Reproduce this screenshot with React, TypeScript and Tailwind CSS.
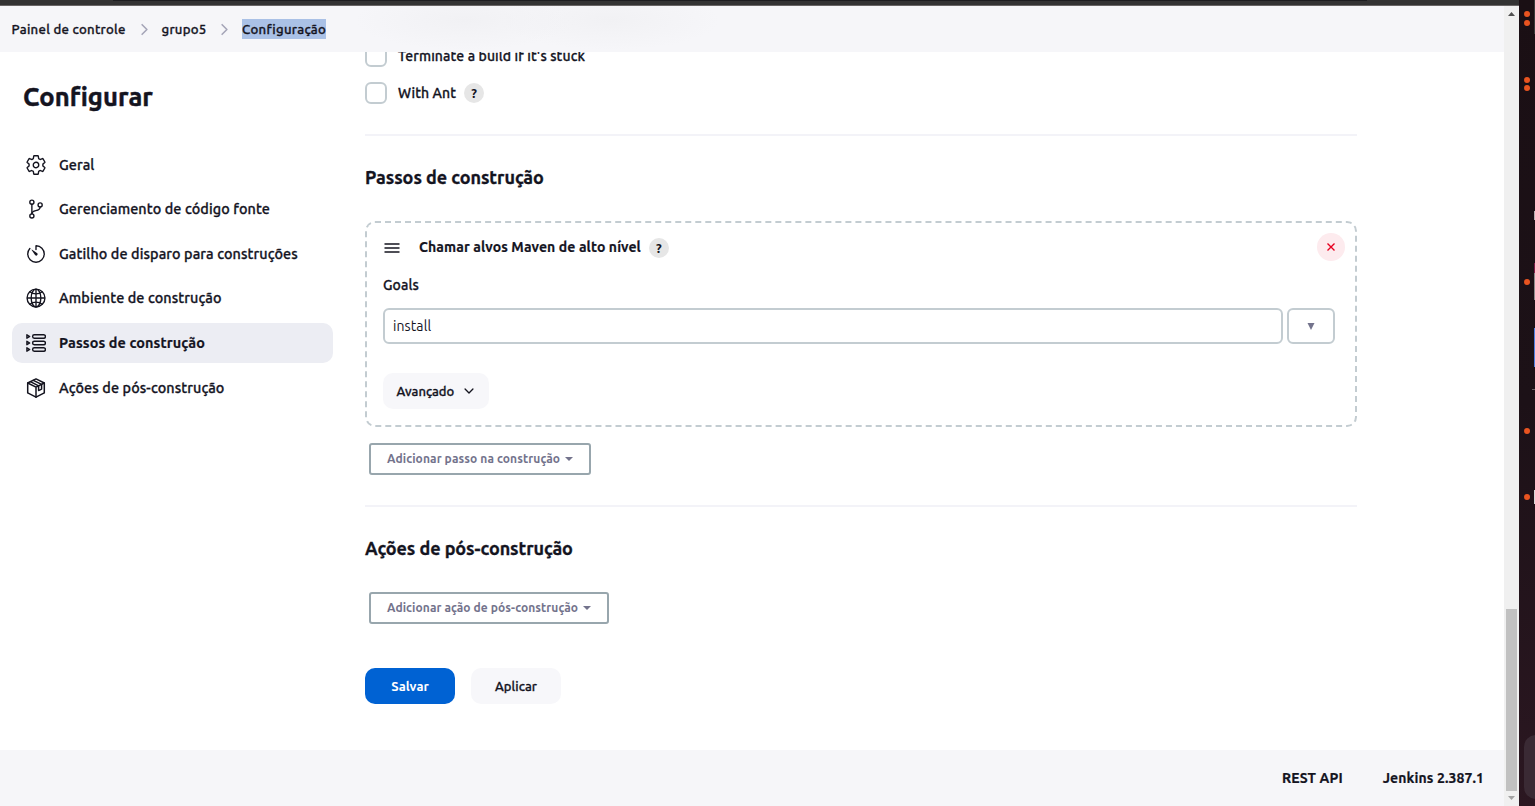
import type { ReactNode } from "react";
import {
  IoChevronDown,
  IoChevronForward,
  IoGitBranchOutline,
  IoGlobeOutline,
  IoSettingsOutline,
  IoTimerOutline,
} from "react-icons/io5";

function StepsIcon() {
  return (
    <svg viewBox="0 0 20 20" className="size-5" fill="none" stroke="currentColor" strokeWidth="1.4" strokeLinejoin="round">
      {[3.5, 10, 16.5].map((y) => (
        <g key={y}>
          <path d={`M0.9 ${y - 1.7}L3.7 ${y}L0.9 ${y + 1.7}Z`} />
          <rect x="6.6" y={y - 1.7} width="12.8" height="3.4" rx="1.7" />
        </g>
      ))}
    </svg>
  );
}

function PackageIcon() {
  return (
    <svg viewBox="0 0 20 20" className="size-5" fill="none" stroke="currentColor" strokeWidth="1.5" strokeLinejoin="round" strokeLinecap="round">
      <path d="M10 0.9L18.3 5V14.9L10 19.2L1.7 14.9V5Z" />
      <path d="M1.7 5L10 9.2L18.3 5M10 9.2V19.2" />
      <path d="M4.4 3.7L12.6 7.9V12.6L15.6 11.1V6.4L7.3 2.3" />
    </svg>
  );
}

function HelpBadge() {
  return (
    <span className="flex size-5 items-center justify-center rounded-full bg-[#e6e6e6] text-[13px] leading-none font-bold">?</span>
  );
}

function Checkbox({ children }: { children: ReactNode }) {
  return (
    <div className="flex h-[22px] items-center">
      <span className="size-[22px] rounded-md border-2 border-[#c3ccd1] bg-white" />
      <span className="ml-[11px] flex items-center gap-2 font-medium">{children}</span>
    </div>
  );
}

function Caret() {
  return (
    <svg viewBox="0 0 8 4" className="ml-[5px] h-1 w-2" fill="currentColor">
      <path d="M0 0H8L4 4Z" />
    </svg>
  );
}

const navItems = [
  { label: "Geral", icon: <IoSettingsOutline className="-m-px size-[22px]" />, row: "" },
  { label: "Gerenciamento de código fonte", icon: <IoGitBranchOutline className="-m-px size-[22px]" />, row: "mt-1" },
  { label: "Gatilho de disparo para construções", icon: <IoTimerOutline className="-m-px size-[22px]" />, row: "mt-[5px]" },
  { label: "Ambiente de construção", icon: <IoGlobeOutline className="-m-px size-[22px]" />, row: "mt-1" },
  { label: "Passos de construção", icon: <StepsIcon />, row: "mt-[5px]", active: true },
  { label: "Ações de pós-construção", icon: <PackageIcon />, row: "mt-[5px]" },
];

function Sidebar() {
  return (
    <aside className="w-[333px] shrink-0 pl-3">
      <h1 className="mt-[26px] pl-[11px] text-[25.6px] leading-[38px] font-bold tracking-[0.05px] [-webkit-text-stroke:0.5px]">Configurar</h1>
      <nav className="mt-[29px] flex flex-col">
        {navItems.map((item) => (
          <a key={item.label} className={`flex h-10 items-center gap-[13px] rounded-[10px] pl-[14px] text-[14.4px] ${item.row} ${item.active ? "bg-[#ecedf3]" : ""}`}>
            {item.icon}
            <span className={item.active ? "pt-[2px] font-bold tracking-[0.1px] [-webkit-text-stroke:0.2px]" : "pt-[2px] font-medium tracking-[0.09px] [-webkit-text-stroke:0.3px]"}>
              {item.label}
            </span>
          </a>
        ))}
      </nav>
    </aside>
  );
}

function BuildStep() {
  return (
    <div className="mt-[31px] h-[206px] rounded-[10px] border-2 border-dashed border-[#c3ccd1] pr-[20px] pl-4">
      <div className="mt-[10px] flex h-7 items-center">
        <svg viewBox="0 0 16 10" className="mt-[2px] ml-px h-[10px] w-4" fill="none" stroke="currentColor" strokeWidth="1.5">
          <path d="M0.5 1H15.5M0.5 5H15.5M0.5 9H15.5" />
        </svg>
        <span className="ml-[19px] font-bold tracking-[0.11px] [-webkit-text-stroke:0.2px]">Chamar alvos Maven de alto nível</span>
        <span className="mt-[2px] ml-2">
          <HelpBadge />
        </span>
        <button className="-mr-[10px] ml-auto flex size-7 items-center justify-center rounded-full bg-[#fdebee] text-[#e6001f]">
          <svg viewBox="0 0 8 8" className="size-2" stroke="currentColor" strokeWidth="1.4">
            <path d="M0.5 0.5L7.5 7.5M7.5 0.5L0.5 7.5" />
          </svg>
        </button>
      </div>
      <div className="mt-[14px] leading-5 font-medium tracking-[0.1px] [-webkit-text-stroke:0.3px]">Goals</div>
      <div className="mt-[13px] flex gap-1">
        <div className="flex h-9 flex-1 items-center rounded-md border-2 border-[#c3ccd1] px-2 tracking-[0.1px]">install</div>
        <button className="flex h-9 w-12 items-center justify-center rounded-md border-2 border-[#c3ccd1] text-[#73738c]">
          <svg viewBox="0 0 8 7" className="h-[7px] w-2" fill="currentColor">
            <path d="M0.5 0H7.5L4 7Z" />
          </svg>
        </button>
      </div>
      <button className="mt-[29px] flex h-9 w-[106px] items-center rounded-[10px] bg-[#f7f7fa] pt-px pl-[13.5px] text-[13px] font-medium [-webkit-text-stroke:0.3px]">
        Avançado
        <IoChevronDown className="mb-[2px] ml-[8px] size-[14px]" />
      </button>
    </div>
  );
}

function Dots({ className, count }: { className: string; count: number }) {
  return (
    <div className={`flex flex-col gap-[2.5px] pl-[5px] ${className}`}>
      {Array.from({ length: count }, (_, i) => (
        <span key={i} className="size-[6px] rounded-full bg-[#e95420]" />
      ))}
    </div>
  );
}

function Dock() {
  return (
    <div className="relative w-4 shrink-0 overflow-hidden bg-linear-to-b from-[#1a0f14] via-[#1c1117] to-[#2b1721]">
      <Dots count={2} className="pt-[11px]" />
      <Dots count={2} className="pt-[51px]" />
      <Dots count={1} className="pt-[188px]" />
      <Dots count={1} className="pt-[143px]" />
      <Dots count={1} className="pt-[60px]" />
      <span className="absolute top-0 left-[15px] h-[34px] w-px bg-[#3a3a3a]" />
      <span className="absolute top-[211px] left-[15px] h-[9px] w-px bg-[#b5aeb0]" />
      <span className="absolute top-[263px] left-[15px] h-[10px] w-px bg-[#7b1b46]" />
      <span className="absolute top-[273px] left-[15px] h-[27px] w-px bg-[#8a8a8a]" />
      <span className="absolute top-[328px] left-[15px] h-[39px] w-px bg-[#4d7fe0]" />
      <span className="absolute top-[389px] left-[13px] h-px w-[3px] bg-[#6a6266]" />
      <span className="absolute top-[490px] left-[15px] h-[14px] w-px bg-[#d5d5d5]" />
      <span className="absolute top-[735px] left-[5px] h-16 w-16 rounded-xl bg-[#3a2a34]" />
    </div>
  );
}

export default function App() {
  return (
    <div className="flex h-[806px] w-[1535px] overflow-hidden bg-white font-['Ubuntu','Noto_Sans',sans-serif] text-[14px] text-[#14141f]">
      <div className="flex w-[1519px] flex-col">
        <div className="flex h-[6px] shrink-0 flex-col border-b border-[#686565] bg-[#333333] pl-[113px]">
          <div className="h-px w-[1254px] bg-[#1d1d20]" />
        </div>
        <div className="flex min-h-0 flex-1">
          <div className="flex w-[1504px] flex-col">
            <header className="flex h-[46px] shrink-0 items-center bg-[#f6f6f9] bg-[radial-gradient(ellipse_110px_30px_at_465px_14px,#f1f1f4,transparent),radial-gradient(ellipse_110px_30px_at_610px_14px,#f1f1f4,transparent)] pl-[11.5px] text-[13.2px] font-medium">
              <span className="h-5 w-[115px] leading-5 tracking-[0.27px] whitespace-nowrap [-webkit-text-stroke:0.3px]">Painel de controle</span>
              <IoChevronForward className="mx-[9px] size-[17px] text-[#a5a5b8]" />
              <span className="h-5 w-[45.5px] leading-5 tracking-[0.25px] [-webkit-text-stroke:0.3px]">grupo5</span>
              <IoChevronForward className="mx-[9px] size-[17px] text-[#a5a5b8]" />
              <span className="h-5 bg-[#aac1e6] leading-5 tracking-[0.28px] [-webkit-text-stroke:0.3px]">Configuração</span>
            </header>
            <div className="flex min-h-0 flex-1 overflow-hidden">
              <Sidebar />
              <main className="ml-8 w-[992px] shrink-0">
                <div className="-mt-[7px] flex flex-col gap-[15px]">
                  <Checkbox>
                    <span className="tracking-[0.11px] [-webkit-text-stroke:0.3px]">Terminate a build if it's stuck</span>
                  </Checkbox>
                  <Checkbox>
                    <span className="tracking-[0.08px] [-webkit-text-stroke:0.3px]">With Ant</span>
                    <HelpBadge />
                  </Checkbox>
                </div>
                <hr className="mt-[30px] border-t-2 border-[#f3f3f8]" />
                <h2 className="mt-[28px] text-[18px] leading-[26px] font-bold tracking-[-0.06px] [-webkit-text-stroke:0.3px]">Passos de construção</h2>
                <BuildStep />
                <button className="mt-4 ml-1 flex h-8 w-[222px] items-center rounded-[3px] border-2 border-[#98a6ad] pl-4 text-[12px] font-bold tracking-[0.1px] whitespace-nowrap text-[#73738c]">
                  Adicionar passo na construção
                  <Caret />
                </button>
                <hr className="mt-[30px] border-t-2 border-[#f3f3f8]" />
                <h2 className="mt-[28px] text-[18px] leading-[26px] font-bold tracking-[-0.08px] [-webkit-text-stroke:0.3px]">Ações de pós-construção</h2>
                <button className="mt-[31px] ml-1 flex h-8 w-[240px] items-center rounded-[3px] border-2 border-[#98a6ad] pl-4 text-[12px] font-bold tracking-[0.08px] whitespace-nowrap text-[#73738c]">
                  Adicionar ação de pós-construção
                  <Caret />
                </button>
                <div className="mt-11 flex gap-4">
                  <button className="h-9 w-[90px] rounded-[10px] bg-[#0062d3] pt-px text-[13px] font-bold text-white">Salvar</button>
                  <button className="h-9 w-[90px] rounded-[10px] bg-[#f7f7fa] pt-px text-[13px] font-medium tracking-[0.1px] [-webkit-text-stroke:0.3px]">Aplicar</button>
                </div>
              </main>
            </div>
            <footer className="flex h-14 shrink-0 items-center justify-end gap-10 bg-[#f6f6f9] pr-5 font-bold [-webkit-text-stroke:0.2px]">
              <span className="tracking-[0.1px]">REST API</span>
              <span className="tracking-[0.1px]">Jenkins 2.387.1</span>
            </footer>
          </div>
          <div className="flex w-[15px] flex-col items-center bg-[#f0f0f0]">
            <svg viewBox="0 0 7 4" className="mt-[6px] h-1 w-[7px]" fill="#505050">
              <path d="M3.5 0L7 4H0Z" />
            </svg>
            <div className="mt-[593px] h-[182px] w-[11px] bg-[#c1c1c1]" />
            <svg viewBox="0 0 7 4" className="mt-[5px] h-1 w-[7px]" fill="#a3a3a3">
              <path d="M0 0H7L3.5 4Z" />
            </svg>
          </div>
        </div>
      </div>
      <Dock />
    </div>
  );
}
